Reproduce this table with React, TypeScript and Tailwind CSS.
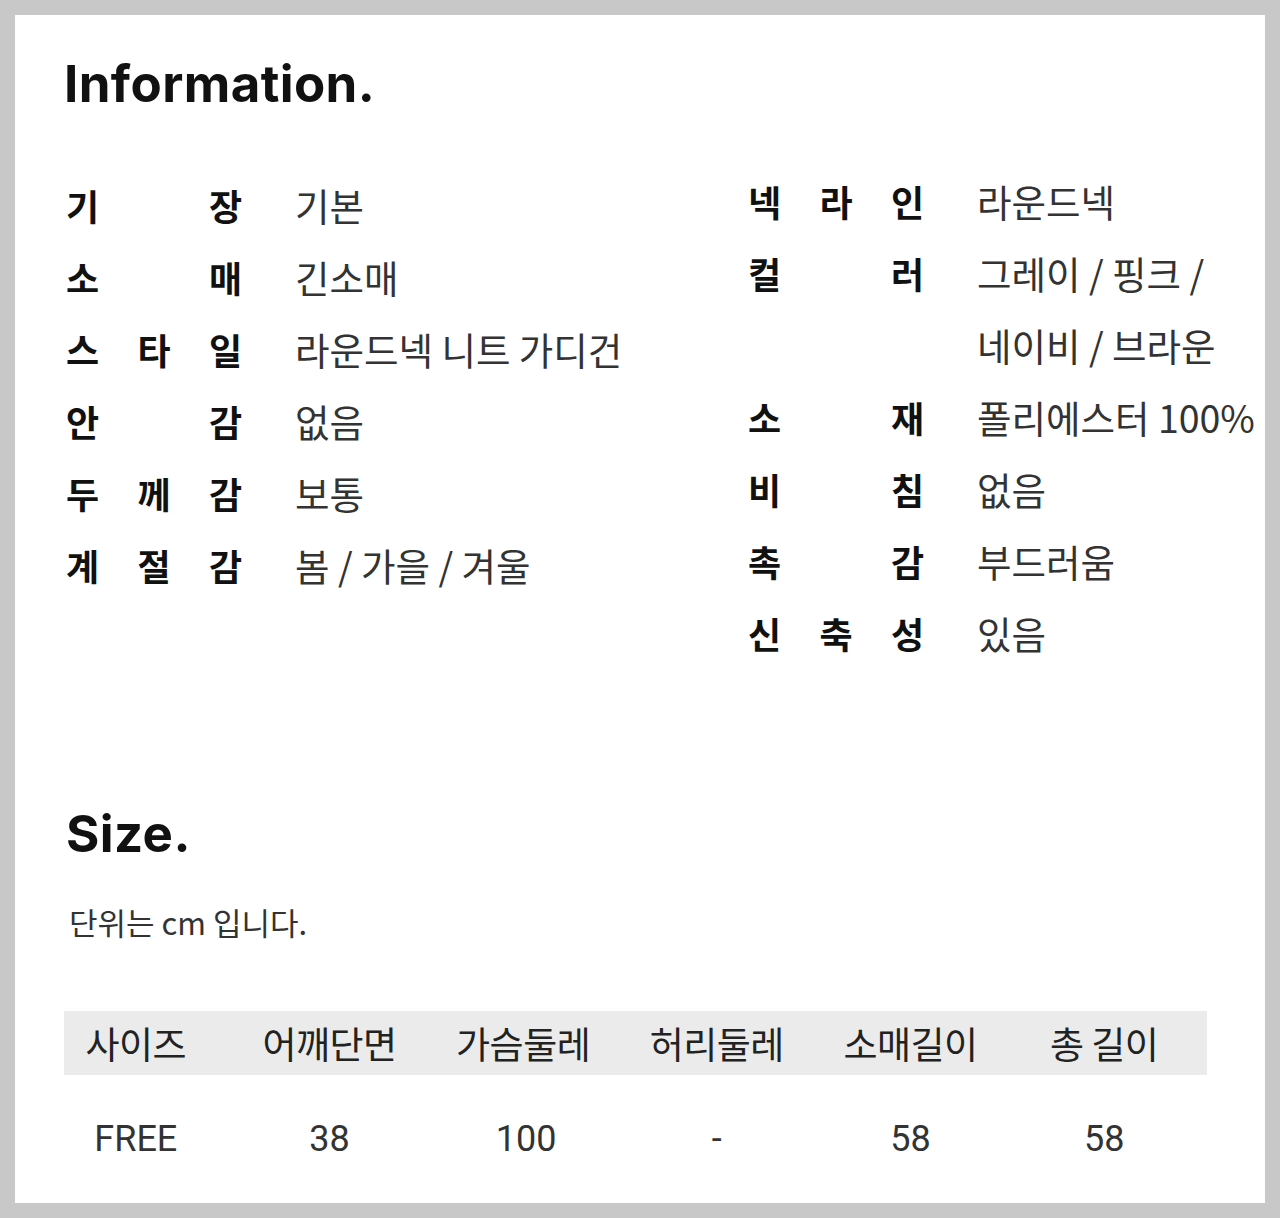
const ko = "font-['Noto_Sans_CJK_KR','Noto_Sans',sans-serif]";

type Row = { label: string[]; value: string[] };

const leftRows: Row[] = [
  { label: ['기', '장'], value: ['기본'] },
  { label: ['소', '매'], value: ['긴소매'] },
  { label: ['스', '타', '일'], value: ['라운드넥 니트 가디건'] },
  { label: ['안', '감'], value: ['없음'] },
  { label: ['두', '께', '감'], value: ['보통'] },
  { label: ['계', '절', '감'], value: ['봄 / 가을 / 겨울'] },
];

const rightRows: Row[] = [
  { label: ['넥', '라', '인'], value: ['라운드넥'] },
  { label: ['컬', '러'], value: ['그레이 / 핑크 /', '네이비 / 브라운'] },
  { label: ['소', '재'], value: ['폴리에스터 100%'] },
  { label: ['비', '침'], value: ['없음'] },
  { label: ['촉', '감'], value: ['부드러움'] },
  { label: ['신', '축', '성'], value: ['있음'] },
];

const sizeHead = ['사이즈', '어깨단면', '가슴둘레', '허리둘레', '소매길이', '총 길이'];
const sizeRow = ['FREE', '38', '100', '-', '58', '58'];

function InfoRow({ row }: { row: Row }) {
  return (
    <div className="flex items-start">
      <div className="flex h-[72px] w-[178px] shrink-0 items-center justify-between pl-[2px] text-[36px] font-bold leading-[72px] text-[#111]">
        {row.label.map((ch, i) => (
          <span key={i}>{ch}</span>
        ))}
      </div>
      <div className="ml-[53px] whitespace-nowrap text-[37.5px] leading-[72px] text-[#333]">
        {row.value.map((line, i) => (
          <div key={i}>{line}</div>
        ))}
      </div>
    </div>
  );
}

export default function App() {
  return (
    <div className="min-h-screen bg-[#c8c8c8] p-[15px]">
      <div className={`bg-white pl-[49px] pr-[58px] pt-[45px] ${ko}`}>
        <h1 className="font-['Inter',sans-serif] text-[51px] font-bold leading-[48px] tracking-[0.4px] text-[#111]">
          Information.
        </h1>

        <div className="mt-[57px] grid grid-cols-[682px_1fr]">
          <div className="pt-1">
            {leftRows.map((r, i) => (
              <InfoRow key={i} row={r} />
            ))}
          </div>
          <div>
            {rightRows.map((r, i) => (
              <InfoRow key={i} row={r} />
            ))}
          </div>
        </div>

        <h2 className="mt-[141px] pl-[2px] font-['Inter',sans-serif] text-[51px] font-bold leading-[48px] tracking-[0.4px] text-[#111]">
          Size.
        </h2>
        <p className="mt-[44px] pl-[5px] text-[31px] leading-[40px] text-[#333]">단위는 cm 입니다.</p>

        <div className="mt-[69px]">
          <div className="h-[64px] bg-[#ebebeb]">
            <div className="-ml-[25px] grid h-full w-[1162px] grid-cols-6 items-center text-center text-[37px] leading-none tracking-[-0.5px] text-[#222]">
              {sizeHead.map((h) => (
                <div key={h}>{h}</div>
              ))}
            </div>
          </div>
          <div className="-ml-[25px] grid h-[128px] w-[1162px] grid-cols-6 items-center text-center font-['Roboto',sans-serif] text-[36px] leading-none text-[#333]">
            {sizeRow.map((v, i) => (
              <div key={i} className={i === 2 ? 'pl-[6px]' : ''}>
                {v}
              </div>
            ))}
          </div>
        </div>
      </div>
    </div>
  );
}
